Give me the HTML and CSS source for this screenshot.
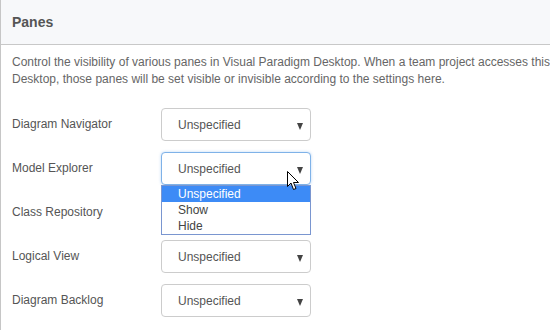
FILE: index.html
```html
<!DOCTYPE html>
<html lang="en">
<head>
<meta charset="utf-8">
<title>Panes</title>
<link rel="stylesheet" href="styles.css">
</head>
<body>
<div class="panel">
  <div class="panel-head">
    <h2>Panes</h2>
  </div>
  <p class="desc">Control the visibility of various panes in Visual Paradigm Desktop. When a team project accesses this<br>Desktop, those panes will be set visible or invisible according to the settings here.</p>

  <div class="rows">
    <div class="row">
      <label>Diagram Navigator</label>
      <div class="select"><span>Unspecified</span><i class="caret"></i></div>
    </div>
    <div class="row">
      <label>Model Explorer</label>
      <div class="select focus"><span>Unspecified</span><i class="caret"></i>
        <ul class="options">
          <li class="active">Unspecified</li>
          <li>Show</li>
          <li>Hide</li>
        </ul>
        <svg class="cursor" width="13" height="20" viewBox="0 0 13 20">
          <path d="M0.5 0.5 L0.5 15.5 L4 12 L6.5 18.5 L9 17.5 L6.5 11.5 L11.5 11.5 Z" fill="#fff" stroke="#000" stroke-width="1" stroke-linejoin="miter"/>
        </svg>
      </div>
    </div>
    <div class="row">
      <label>Class Repository</label>
      <div class="select"><span>Unspecified</span><i class="caret"></i></div>
    </div>
    <div class="row">
      <label>Logical View</label>
      <div class="select"><span>Unspecified</span><i class="caret"></i></div>
    </div>
    <div class="row">
      <label>Diagram Backlog</label>
      <div class="select"><span>Unspecified</span><i class="caret"></i></div>
    </div>
  </div>
</div>
</body>
</html>
```

FILE: styles.css
```css
html, body {
  margin: 0;
  background: #fff;
  font-family: 'Liberation Sans', Arial, sans-serif;
  font-size: 12px;
  color: #555;
}

.panel {
  border-left: 1px solid #c6c6c6;
  height: 330px;
  overflow: hidden;
}

.panel-head {
  background: #f7f8fa;
  border-bottom: 1px solid #c8c8c8;
  height: 44px;
  padding: 0 11px;
  display: flex;
  align-items: center;
}

.panel-head h2 {
  margin: 0;
  font-size: 14px;
  font-weight: bold;
  color: #555;
}

.desc {
  margin: 0;
  padding: 9px 0 0 11px;
  line-height: 17px;
  color: #666;
  white-space: nowrap;
}

.rows {
  padding: 20px 0 0 11px;
  display: flex;
  flex-direction: column;
  gap: 11px;
}

.row {
  display: flex;
  align-items: center;
  height: 33px;
}

.row label {
  width: 149px;
  color: #555;
  margin-top: -2px;
}

.select {
  position: relative;
  box-sizing: border-box;
  width: 150px;
  height: 33px;
  border: 1px solid #ccc;
  border-radius: 4px;
  background: #fff;
  display: flex;
  align-items: center;
  padding-left: 16px;
  color: #555;
}

.select.focus {
  border-color: #7fb2e8;
  box-shadow: 0 0 3px rgba(102, 165, 233, 0.45);
}

.caret {
  position: absolute;
  right: 7px;
  top: 14px;
  width: 0;
  height: 0;
  border-left: 3.5px solid transparent;
  border-right: 3.5px solid transparent;
  border-top: 7px solid #444;
}

.options {
  position: absolute;
  left: -1px;
  top: 32px;
  width: 150px;
  box-sizing: border-box;
  margin: 0;
  padding: 0;
  list-style: none;
  background: #fff;
  border: 1px solid #7a96d0;
  z-index: 2;
}

.options li {
  height: 16px;
  line-height: 16px;
  padding-left: 16px;
  color: #444;
}

.options li.active {
  background: #3d8bf6;
  color: #fff;
}

.cursor {
  position: absolute;
  left: 125px;
  top: 18px;
  z-index: 3;
}
```
